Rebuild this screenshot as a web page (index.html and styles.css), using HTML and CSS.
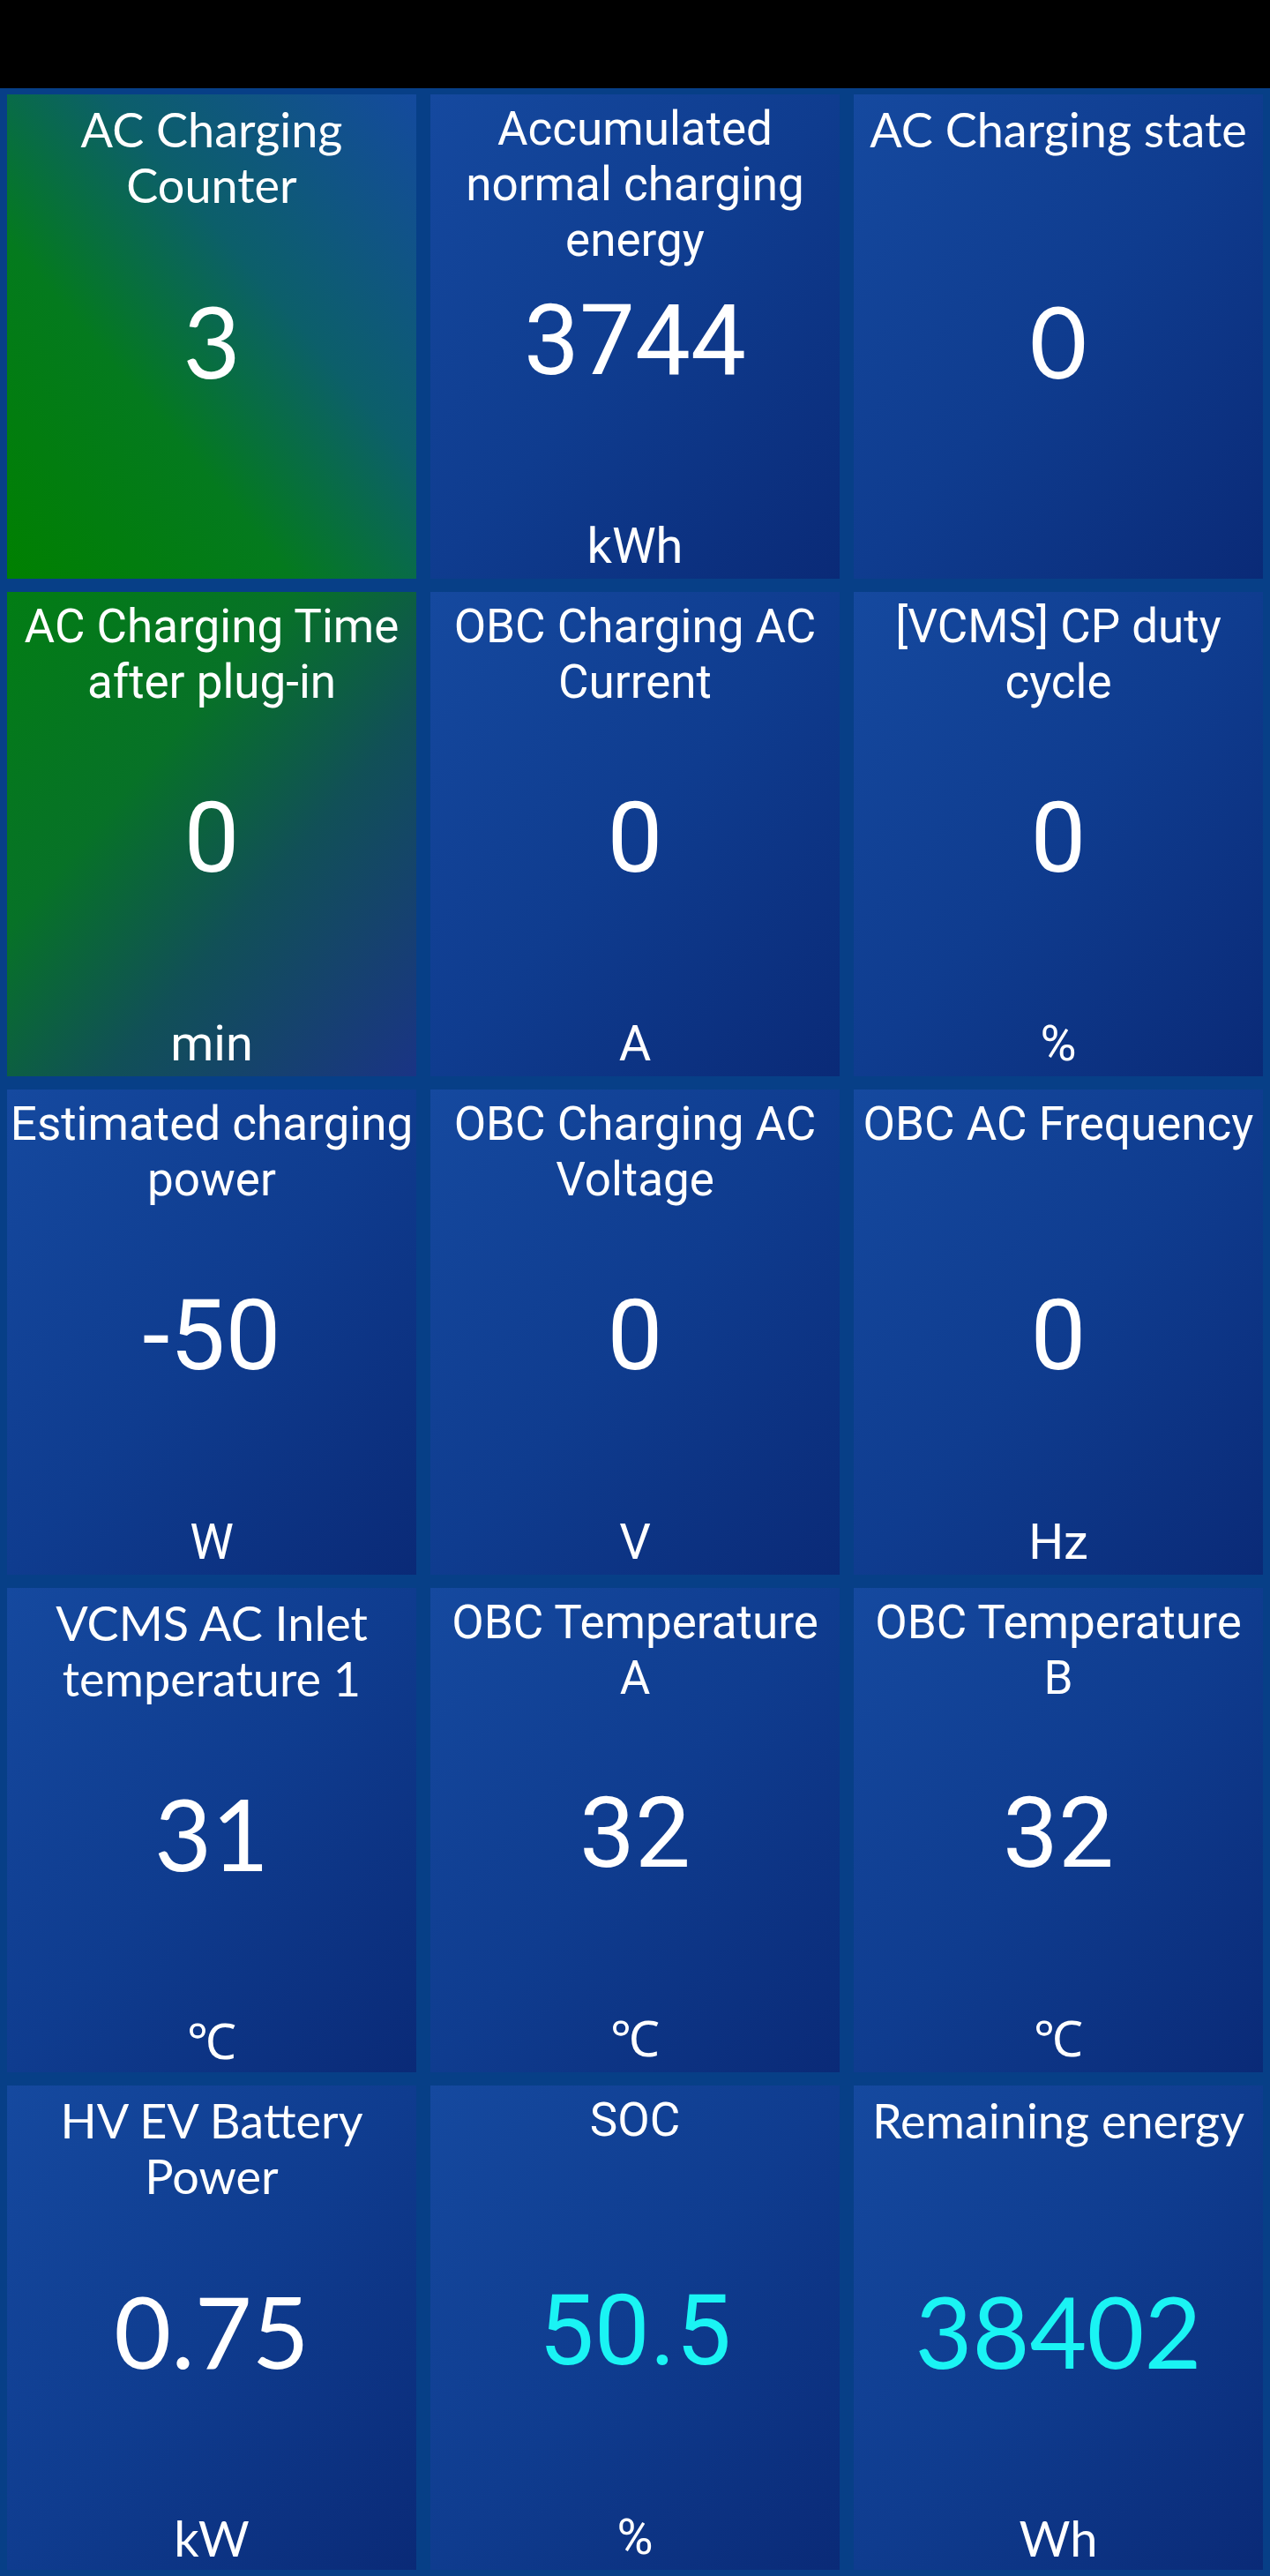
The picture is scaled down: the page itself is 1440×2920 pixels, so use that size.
FILE: index.html
```html
<!DOCTYPE html>
<html lang="en">
<head>
    <meta charset="UTF-8">
    <meta name="viewport" content="width=device-width, initial-scale=1.0">
    <title>Charging Dashboard</title>
    <link rel="stylesheet" href="styles.css">
</head>
<body>
    <div class="status-bar"></div>
    <main class="dashboard">
        <div class="tile green-up wide">
            <div class="tile-title">AC Charging<br>Counter</div>
            <div class="tile-value">3</div>
            <div class="tile-unit"></div>
        </div>
        <div class="tile">
            <div class="tile-title">Accumulated<br>normal charging<br>energy</div>
            <div class="tile-value">3744</div>
            <div class="tile-unit">kWh</div>
        </div>
        <div class="tile wide">
            <div class="tile-title">AC Charging state</div>
            <div class="tile-value">0</div>
            <div class="tile-unit"></div>
        </div>

        <div class="tile green-down">
            <div class="tile-title">AC Charging Time<br>after plug-in</div>
            <div class="tile-value">0</div>
            <div class="tile-unit">min</div>
        </div>
        <div class="tile">
            <div class="tile-title">OBC Charging AC<br>Current</div>
            <div class="tile-value">0</div>
            <div class="tile-unit">A</div>
        </div>
        <div class="tile">
            <div class="tile-title">[VCMS] CP duty<br>cycle</div>
            <div class="tile-value">0</div>
            <div class="tile-unit">%</div>
        </div>

        <div class="tile">
            <div class="tile-title">Estimated charging<br>power</div>
            <div class="tile-value">-50</div>
            <div class="tile-unit">W</div>
        </div>
        <div class="tile">
            <div class="tile-title">OBC Charging AC<br>Voltage</div>
            <div class="tile-value">0</div>
            <div class="tile-unit">V</div>
        </div>
        <div class="tile">
            <div class="tile-title">OBC AC Frequency</div>
            <div class="tile-value">0</div>
            <div class="tile-unit">Hz</div>
        </div>

        <div class="tile wide">
            <div class="tile-title">VCMS AC Inlet<br>temperature 1</div>
            <div class="tile-value">31</div>
            <div class="tile-unit">℃</div>
        </div>
        <div class="tile">
            <div class="tile-title">OBC Temperature<br>A</div>
            <div class="tile-value">32</div>
            <div class="tile-unit">℃</div>
        </div>
        <div class="tile">
            <div class="tile-title">OBC Temperature<br>B</div>
            <div class="tile-value">32</div>
            <div class="tile-unit">℃</div>
        </div>

        <div class="tile wide">
            <div class="tile-title">HV EV Battery<br>Power</div>
            <div class="tile-value">0.75</div>
            <div class="tile-unit">kW</div>
        </div>
        <div class="tile">
            <div class="tile-title">SOC</div>
            <div class="tile-value highlight">50.5</div>
            <div class="tile-unit">%</div>
        </div>
        <div class="tile wide">
            <div class="tile-title">Remaining energy</div>
            <div class="tile-value highlight">38402</div>
            <div class="tile-unit">Wh</div>
        </div>
    </main>
</body>
</html>
```

FILE: styles.css
```css
:root {
    --page-bg: #073f87;
    --tile-light: #15499f;
    --tile-mid: #0f3c8f;
    --tile-dark: #0a2a77;
    --green: #008000;
    --cyan: #1af4f4;
}

html, body {
    margin: 0;
    padding: 0;
    background: var(--page-bg);
}
body {
    width: 1440px;
    font-family: Roboto, "Liberation Sans", sans-serif;
    color: #ffffff;
}
.status-bar {
    height: 100px;
    background: #000000;
}
.dashboard {
    height: 2820px;
    box-sizing: border-box;
    padding: 7px 8px;
    display: grid;
    grid-template-columns: repeat(3, 1fr);
    grid-template-rows: repeat(5, 1fr);
    column-gap: 16px;
    row-gap: 15px;
}
.tile {
    display: grid;
    grid-template-rows: 1fr auto 1fr;
    text-align: center;
    background: linear-gradient(to bottom right, var(--tile-light) 0%, var(--tile-mid) 50%, var(--tile-dark) 100%);
    overflow: hidden;
}
.tile.green-up {
    background: linear-gradient(to top right, var(--green) 0%, #047a1e 35%, #0c5f6a 62%, #144a9e 100%);
}
.tile.green-down {
    background: linear-gradient(to bottom right, #027d14 0%, #077227 35%, #115057 62%, #1a3485 100%);
}
.tile-title {
    align-self: start;
    font-size: 53px;
    line-height: 63px;
    padding-top: 8px;
    white-space: nowrap;
}
.tile-value {
    font-size: 112px;
    line-height: 1;
    padding-top: 8px;
}
.tile-value.highlight {
    color: var(--cyan);
}
.tile-unit {
    align-self: end;
    font-size: 56px;
    line-height: 63px;
    padding-bottom: 5px;
}
.tile.wide {
    font-family: Lato, "Open Sans", sans-serif;
}
.tile.wide .tile-title {
    font-size: 54px;
}
```
